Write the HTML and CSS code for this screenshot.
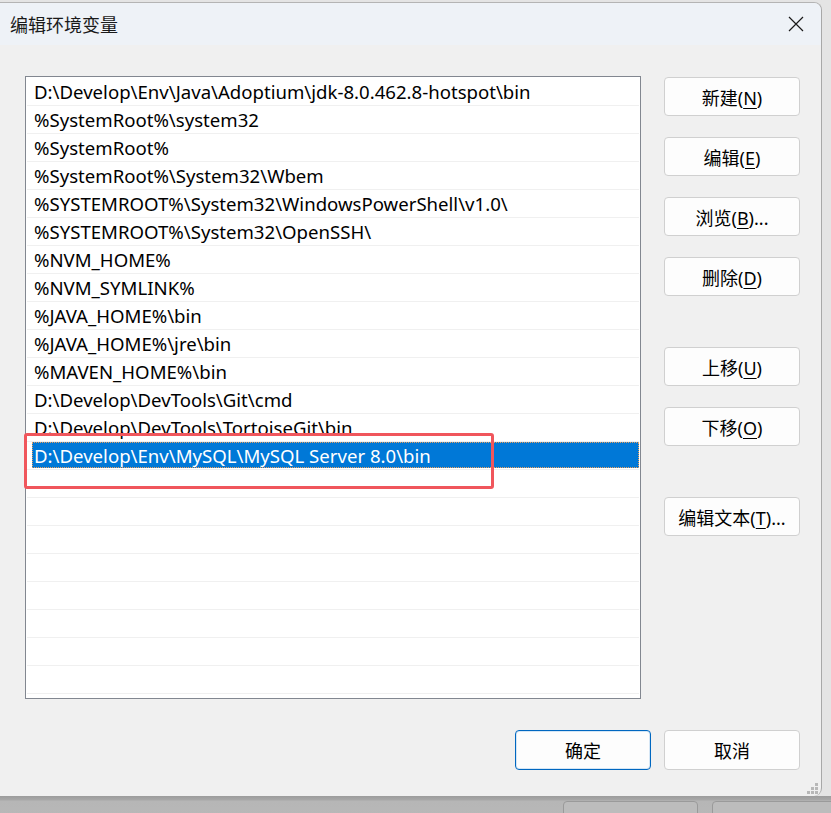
FILE: index.html
```html
<!DOCTYPE html>
<html lang="zh-CN">
<head>
    <meta charset="UTF-8">
    <title>编辑环境变量</title>
    <link rel="stylesheet" href="styles.css">
</head>
<body>
    <div class="dialog">
        <div class="titlebar">
            <span class="title">编辑环境变量</span>
            <svg class="close" width="18" height="18" viewBox="0 0 18 18">
                <path d="M2 2 L16 16 M16 2 L2 16" stroke="#1a1a1a" stroke-width="1.2" fill="none"/>
            </svg>
        </div>
        <div class="content">
            <div class="list">
                <div class="row"><span class="cell">D:\Develop\Env\Java\Adoptium\jdk-8.0.462.8-hotspot\bin</span></div>
                <div class="row"><span class="cell">%SystemRoot%\system32</span></div>
                <div class="row"><span class="cell">%SystemRoot%</span></div>
                <div class="row"><span class="cell">%SystemRoot%\System32\Wbem</span></div>
                <div class="row"><span class="cell">%SYSTEMROOT%\System32\WindowsPowerShell\v1.0\</span></div>
                <div class="row"><span class="cell">%SYSTEMROOT%\System32\OpenSSH\</span></div>
                <div class="row"><span class="cell">%NVM_HOME%</span></div>
                <div class="row"><span class="cell">%NVM_SYMLINK%</span></div>
                <div class="row"><span class="cell">%JAVA_HOME%\bin</span></div>
                <div class="row"><span class="cell">%JAVA_HOME%\jre\bin</span></div>
                <div class="row"><span class="cell">%MAVEN_HOME%\bin</span></div>
                <div class="row"><span class="cell">D:\Develop\DevTools\Git\cmd</span></div>
                <div class="row"><span class="cell">D:\Develop\DevTools\TortoiseGit\bin</span></div>
                <div class="row"><span class="cell selected">D:\Develop\Env\MySQL\MySQL Server 8.0\bin</span></div>
                <div class="row"></div>
                <div class="row"></div>
                <div class="row"></div>
                <div class="row"></div>
                <div class="row"></div>
                <div class="row"></div>
                <div class="row"></div>
                <div class="row"></div>
                <div class="highlight"></div>
            </div>
            <div class="side">
                <button class="btn">新建(<u>N</u>)</button>
                <button class="btn">编辑(<u>E</u>)</button>
                <button class="btn">浏览(<u>B</u>)...</button>
                <button class="btn">删除(<u>D</u>)</button>
                <button class="btn spaced">上移(<u>U</u>)</button>
                <button class="btn">下移(<u>O</u>)</button>
                <button class="btn spaced">编辑文本(<u>T</u>)...</button>
            </div>
        </div>
        <div class="footer">
            <button class="btn default">确定</button>
            <button class="btn">取消</button>
        </div>
        <svg class="grip" width="12" height="12" viewBox="0 0 12 12">
            <rect x="8" y="0" width="3" height="3" fill="#b8b8b8"/>
            <rect x="4" y="4" width="3" height="3" fill="#b8b8b8"/>
            <rect x="8" y="4" width="3" height="3" fill="#b8b8b8"/>
            <rect x="0" y="8" width="3" height="3" fill="#b8b8b8"/>
            <rect x="4" y="8" width="3" height="3" fill="#b8b8b8"/>
            <rect x="8" y="8" width="3" height="3" fill="#b8b8b8"/>
        </svg>
    </div>
    <div class="behind">
        <div class="behind-btn"></div>
        <div class="behind-btn"></div>
    </div>
</body>
</html>
```

FILE: styles.css
```css
body {
    margin: 0;
    padding: 2px 0 0 0;
    width: 831px;
    height: 811px;
    overflow: hidden;
    background-color: #e4e4e4;
    font-family: "Noto Sans", "Noto Sans CJK SC", sans-serif;
    color: #000;
}
.dialog {
    position: relative;
    width: 822px;
    height: 794px;
    background-color: #f0f0f0;
    border-radius: 0 8px 8px 0;
    border-top: 1px solid #b4b4b4;
    border-right: 1px solid #a8a8a8;
    box-sizing: border-box;
    overflow: hidden;
}
.titlebar {
    height: 42px;
    background-color: #eef2f7;
    display: flex;
    align-items: center;
    justify-content: space-between;
    padding: 0 16px 0 10px;
}
.title {
    font-family: "Noto Sans CJK SC", sans-serif;
    font-size: 18px;
    color: #1a1a1a;
}
.content {
    display: flex;
    padding: 31px 0 0 25px;
}
.list {
    position: relative;
    width: 616px;
    height: 623px;
    box-sizing: border-box;
    border: 1px solid #828790;
    background-color: #fff;
    padding: 1px 1px 0 1px;
}
.row {
    height: 28px;
    box-sizing: border-box;
    border-bottom: 1px solid #f0f0f0;
    padding: 0 0 1px 5px;
    display: flex;
    font-size: 18.6px;
    line-height: 27px;
    white-space: nowrap;
}
.cell {
    padding-left: 2px;
}
.cell.selected {
    flex: 1;
    background-color: #0078d7;
    color: #fff;
    outline: 1px dotted #e8a060;
    outline-offset: -1px;
}
.highlight {
    position: absolute;
    left: -2px;
    top: 356px;
    width: 470px;
    height: 56px;
    box-sizing: border-box;
    border: 3px solid #f0565c;
    border-radius: 3px;
}
.side {
    display: flex;
    flex-direction: column;
    gap: 21px;
    margin-left: 23px;
    padding-top: 1px;
}
.btn {
    width: 136px;
    height: 39px;
    box-sizing: border-box;
    background-color: #fdfdfd;
    border: 1px solid #d0d0d0;
    border-radius: 4px;
    font-family: "Noto Sans", "Noto Sans CJK SC", sans-serif;
    font-size: 18px;
    color: #000;
    padding: 0;
}
.btn u {
    text-decoration-thickness: 1px;
    text-underline-offset: 3px;
}
.side .spaced {
    margin-top: 30px;
}
.footer {
    display: flex;
    gap: 13px;
    padding: 31px 0 0 515px;
}
.footer .btn {
    height: 40px;
}
.btn.default {
    border: 1px solid #0067c0;
    box-shadow: inset 0 0 0 1px #d5e6f5;
}
.grip {
    position: absolute;
    right: 2px;
    bottom: 1px;
}
.behind {
    display: flex;
    gap: 14px;
    height: 20px;
    padding-left: 563px;
    background: linear-gradient(#9c9c9c 0, #a8a8a8 4px, #b6b6b6 5px, #b8b8b8 100%);
}
.behind-btn {
    flex-shrink: 0;
    width: 135px;
    margin-top: 5px;
    height: 20px;
    box-sizing: border-box;
    border: 1px solid #9a9a9a;
    border-radius: 4px;
    background-color: #bcbcbc;
}
```
